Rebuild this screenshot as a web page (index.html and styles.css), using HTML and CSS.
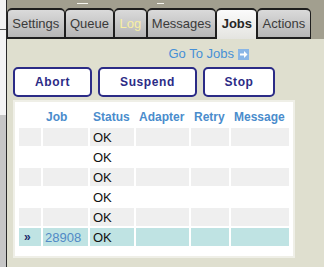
FILE: index.html
```html
<!DOCTYPE html>
<html lang="en">
<head>
    <meta charset="UTF-8">
    <meta name="viewport" content="width=device-width, initial-scale=1.0">
    <title>Jobs</title>
    <link rel="stylesheet" href="styles.css">
</head>
<body>

    <div class="frame">
        <div class="side">
            <div class="side-top"></div>
            <div class="side-mid"></div>
            <div class="side-low"></div>
        </div>

        <div class="main">
            <div class="bar">
                <div class="marks">
                    <span class="mark mark-a"></span>
                    <span class="mark mark-b"></span>
                </div>
                <div class="tabs">
                    <div class="tab">Settings</div>
                    <div class="tab">Queue</div>
                    <div class="tab tab-notify">Log</div>
                    <div class="tab">Messages</div>
                    <div class="tab tab-active">Jobs</div>
                    <div class="tab">Actions</div>
                </div>
            </div>

            <div class="content">
                <div class="goto">
                    <a href="#">Go To Jobs</a>
                    <svg width="11" height="11" viewBox="0 0 11 11">
                        <rect width="11" height="11" fill="#8ab6e6"/>
                        <rect x="2" y="4.5" width="4.5" height="2" fill="#fff"/>
                        <polygon points="6,2 9.5,5.5 6,9" fill="#fff"/>
                    </svg>
                </div>

                <div class="buttons">
                    <button class="btn btn-abort">Abort</button>
                    <button class="btn btn-suspend">Suspend</button>
                    <button class="btn btn-stop">Stop</button>
                </div>

                <div class="panel">
                    <table class="jobs">
                        <thead>
                            <tr>
                                <th class="c-mark"></th>
                                <th class="c-job">Job</th>
                                <th class="c-status">Status</th>
                                <th class="c-adapter">Adapter</th>
                                <th class="c-retry">Retry</th>
                                <th class="c-msg">Message</th>
                            </tr>
                        </thead>
                        <tbody>
                            <tr class="odd"><td></td><td></td><td>OK</td><td></td><td></td><td></td></tr>
                            <tr><td></td><td></td><td>OK</td><td></td><td></td><td></td></tr>
                            <tr class="odd"><td></td><td></td><td>OK</td><td></td><td></td><td></td></tr>
                            <tr><td></td><td></td><td>OK</td><td></td><td></td><td></td></tr>
                            <tr class="odd"><td></td><td></td><td>OK</td><td></td><td></td><td></td></tr>
                            <tr class="sel"><td class="pointer">&raquo;</td><td class="job-id">28908</td><td>OK</td><td></td><td></td><td></td></tr>
                        </tbody>
                    </table>
                </div>
            </div>
        </div>
    </div>

</body>
</html>
```

FILE: styles.css
```css
html, body {
    margin: 0;
    padding: 0;
    height: 100%;
}
body {
    font-family: "Liberation Sans", Arial, sans-serif;
    background-color: #dfdfcf;
    overflow: hidden;
}
.frame {
    display: flex;
    height: 267px;
}

/* neighbouring window on the left */
.side {
    width: 6px;
    border-right: 1px solid #2a2a2a;
    display: flex;
    flex-direction: column;
}
.side-top {
    height: 29px;
    background: #f2f2f2;
    border-bottom: 1px solid #555;
}
.side-mid {
    height: 85px;
    background: #f4f4f4;
}
.side-low {
    flex: 1;
    background: #c6c6c6;
}

.main {
    flex: 1;
    display: flex;
    flex-direction: column;
}

/* tab bar */
.bar {
    background: #a29f8f;
}
.marks {
    display: flex;
    height: 5px;
    padding-top: 3px;
}
.mark {
    height: 1px;
    background: #f4f4ee;
}
.mark-a {
    margin-left: 70px;
    width: 11px;
}
.mark-b {
    margin-left: 69px;
    width: 7px;
}
.tabs {
    display: flex;
    align-items: flex-end;
}
.tab {
    height: 27px;
    line-height: 27px;
    padding: 0 4.3px;
    border: solid #1e1e1e;
    border-width: 2px 1px 2px 1px;
    border-radius: 5px 5px 0 0;
    background: linear-gradient(#dadada, #b6b6b6);
    font-size: 13px;
    color: #3a3a3a;
}
.tab-notify {
    color: #f8efa2;
}
.tab-active {
    height: 29px;
    border-bottom: 0;
    background: linear-gradient(#fbfbfb, #e4e4e0);
    font-weight: bold;
    color: #262626;
}

/* page body */
.content {
    flex: 1;
    padding: 0 29px 0 6px;
}
.goto {
    display: flex;
    justify-content: flex-end;
    align-items: center;
    gap: 4px;
    height: 16px;
    margin-top: 7px;
    padding-right: 46px;
}
.goto a {
    font-size: 13px;
    line-height: 16px;
    color: #4690d6;
    text-decoration: none;
}
.buttons {
    display: flex;
    gap: 6px;
    margin-top: 5px;
}
.btn {
    height: 30px;
    padding: 0;
    background: white;
    border: 2px solid #2b2b86;
    border-radius: 5px;
    font-family: "Liberation Sans", Arial, sans-serif;
    font-size: 12px;
    font-weight: bold;
    letter-spacing: 0.6px;
    color: #2b2b86;
}
.btn-abort {
    width: 79px;
}
.btn-suspend {
    width: 99px;
}
.btn-stop {
    width: 72px;
}

.panel {
    margin-top: 3px;
    border: 2px solid #efefe7;
    background: white;
    padding: 4px 2px 8px 2px;
}
.jobs {
    width: 274px;
    table-layout: fixed;
    border-spacing: 2px;
}
.jobs th, .jobs td {
    height: 18px;
    padding: 0 2px 0 3px;
    text-align: left;
    vertical-align: middle;
    white-space: nowrap;
    overflow: hidden;
}
.jobs th {
    font-size: 12px;
    font-weight: bold;
    color: #4a8ccc;
}
.jobs td {
    font-size: 13px;
    color: #111;
}
.c-mark { width: 17px; }
.c-job { width: 40px; }
.c-status { width: 39px; }
.c-adapter { width: 48px; }
.c-retry { width: 33px; }
.c-msg { width: 53px; }

.jobs tr.odd td {
    background: #efefef;
}
.jobs tr.sel td {
    background: #bfe3e3;
}
.jobs td.pointer {
    padding-left: 5px;
    font-size: 12px;
    font-weight: bold;
    color: #1c2a6a;
}
.jobs td.job-id {
    padding-left: 2px;
    color: #5089c6;
}
```
